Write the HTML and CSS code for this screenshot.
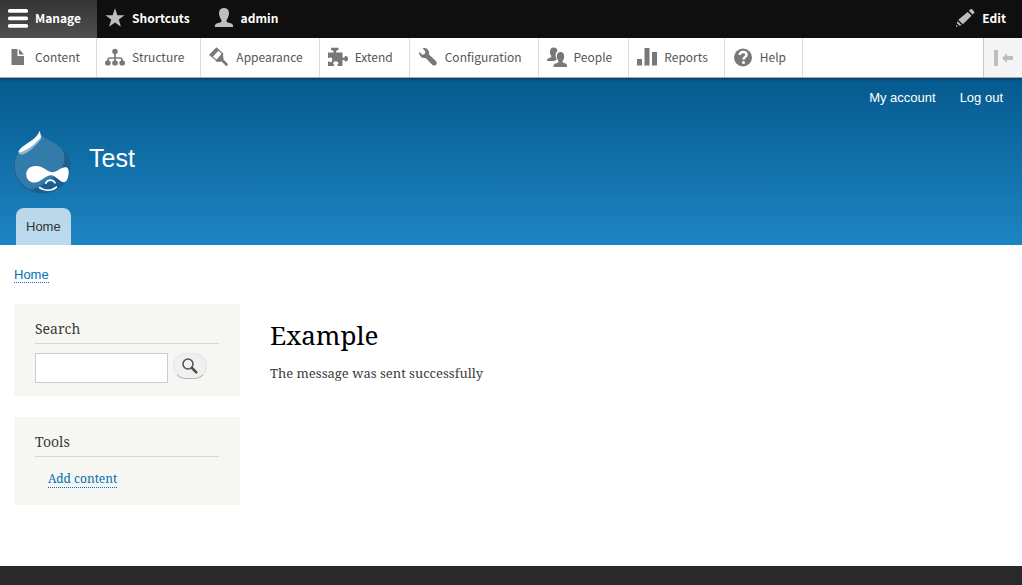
FILE: index.html
```html
<!DOCTYPE html>
<html lang="en">
<head>
<meta charset="utf-8">
<meta name="viewport" content="width=device-width, initial-scale=1">
<title>Example | Test</title>
<link rel="stylesheet" href="styles.css">
</head>
<body>
<nav class="toolbar" aria-label="Administration toolbar">
  <div class="toolbar-bar">
    <a class="bar-item is-active" href="#manage"><svg class="icon" viewBox="0 0 20 20" fill="#fff"><rect y="1" width="20" height="3.700" rx="1.500"/><rect y="8.500" width="20" height="3.700" rx="1.500"/><rect y="16" width="20" height="3.700" rx="1.500"/></svg>Manage</a>
    <a class="bar-item" href="#shortcuts"><svg class="icon" viewBox="0 0 20 20" fill="#bebebe"><path d="M10 .3l2.400 6.900h7.100l-5.700 4.300 2.100 7.200-5.900-4.300-5.900 4.300 2.100-7.200L.5 7.200h7.100z"/></svg>Shortcuts</a>
    <a class="bar-item" href="#admin"><svg class="icon" viewBox="0 0 20 20" fill="#bebebe"><path d="M19.200 19H.8c0-2.700 1-3.300 3.400-4 2.100-.6 3.300-.8 3.300-2.300 0-1-1.100-1.900-1.600-3.400C5 6.700 4.800 4.900 5.300 3.200 5.900 1.100 7.600.1 10 .1s4.100 1 4.700 3.100c.5 1.700.3 3.500-.6 6.100-.5 1.500-1.600 2.400-1.600 3.400 0 1.500 1.200 1.700 3.300 2.300 2.400.7 3.400 1.300 3.400 4z"/></svg>admin</a>
    <button class="bar-item bar-edit" type="button"><svg class="icon" viewBox="0 0 20 20" fill="#bebebe"><path d="M13.800 2.800l1.700-1.600q.8-.5 1.500.1l2.100 2.100q.6.700 0 1.500l-1.600 1.700zM12.700 3.900l3.800 3.800-8.600 8.500-4.600-4.400zM2.600 13.200l4 3.800-2.200.7-2.500-2.500zM1.400 16.700l1.500 1.500-1.900.7z"/></svg>Edit</button>
  </div>
  <div class="toolbar-tray">
    <a class="tray-item" href="#content"><svg class="icon" viewBox="0 0 20 20" fill="#787878"><path d="M3.500 2h6v7H16v9H3.500zM11 2l5 5.500h-5z"/></svg>Content</a>
    <a class="tray-item" href="#structure"><svg class="icon" viewBox="0 0 20 20"><path d="M10 4v12M3 16v-3q0-2 2-2h10q2 0 2 2v3" fill="none" stroke="#787878" stroke-width="1.700"/><g fill="#787878"><circle cx="10" cy="4.500" r="2.700"/><rect y="13.500" width="5.600" height="5" rx="2"/><rect x="7.200" y="13.500" width="5.600" height="5" rx="2"/><rect x="14.400" y="13.500" width="5.600" height="5" rx="2"/></g></svg>Structure</a>
    <a class="tray-item" href="#appearance"><svg class="icon" viewBox="0 0 20 20"><path d="M7.500 1.300l6.300 5.700-6 6.500L1 8z" fill="#fff" stroke="#787878" stroke-width="1.200"/><path d="M7.500.6l2.600 2.300-6.600 7L.4 7.700zM13.600 5.800l1 6.200-3.300 3-5-.4z" fill="#787878"/><path d="M12.500 12.500l5 5" stroke="#787878" stroke-width="2.600" stroke-linecap="round"/></svg>Appearance</a>
    <a class="tray-item" href="#extend"><svg class="icon" viewBox="0 0 20 20" fill="#787878"><path d="M0 5.500h5.500V4L3 2.700V.8h7.500v1.900L8 4v1.500h6.500v5l1.700.2 1-1.600q2.800-.3 2.800 2.700t-2.800 2.700l-1-1.600-1.700.2V19h-5v-1.200l1-1.600q-.3-2-2.700-2t-2.700 2l1 1.600V19H0v-4.500h1l1.500.8q1.800-.3 1.800-2.500T2.500 10.200L1 11H0z"/></svg>Extend</a>
    <a class="tray-item" href="#configuration"><svg class="icon" viewBox="0 0 20 20" fill="#787878"><path d="M4.500 1.300q3.300-.8 5.200 1.100t1.300 5l7 6.600q1.600 2 .1 3.700-1.700 1.700-3.700.2L7.600 11q-3 .5-5-1.500T1.100 4.700L4.300 7.800l2.500-.7.600-2.600z"/></svg>Configuration</a>
    <a class="tray-item" href="#people"><svg class="icon" viewBox="0 0 20 20" fill="#787878"><path d="M7 14H0c0-2 .5-2.500 2-3s2.300-.6 2.300-1.600S3 8 3 5s1-4.500 3.700-4.500S10.400 2 10.400 4q-2 1.500-1.800 4.700c.1 2 1.200 3 1 3.800S8.500 13.300 7 14z"/><path d="M20 20H6.500c0-2.500.8-3.200 2.500-3.700s2.500-.7 2.500-1.800-1.700-2-1.700-5S11 5 13.500 5s3.700 1.500 3.700 4.500-1.700 3.900-1.700 5 .8 1.300 2.500 1.800S20 17.500 20 20z"/></svg>People</a>
    <a class="tray-item" href="#reports"><svg class="icon" viewBox="0 0 20 20" fill="#787878"><path d="M0 12h5v6.500H0zM7.500 1h5v17.500h-5zM15 5h5v13.500h-5z"/></svg>Reports</a>
    <a class="tray-item" href="#help"><svg class="icon" viewBox="0 0 20 20"><circle cx="10" cy="10.500" r="9" fill="#787878"/><path d="M6.700 8q.2-3 3.500-3t3.400 2.800c0 2.400-3.100 2.200-3.100 4.700" fill="none" stroke="#fff" stroke-width="2.400"/><circle cx="10.500" cy="15.500" r="1.500" fill="#fff"/></svg>Help</a>
    <button class="orientation" type="button" aria-label="Vertical orientation"><svg class="icon" viewBox="0 0 20 20" fill="#bebebe"><path d="M1 2h4v16H1zM9 10l5-5v3h6v4h-6v3z"/></svg></button>
  </div>
</nav>

<header class="header">
  <nav class="account" aria-label="User account menu"><a href="#account">My account</a><a href="#logout">Log out</a></nav>
  <div class="branding">
    <a class="logo" href="#home" aria-label="Home"><svg viewBox="0 0 172 195">
      <path d="M79 0c2 17 13 24 36 37 32 18 56 41 56 72 0 50-38 85-86 85S0 157 0 109c0-30 15-45 31-60 20-18 46-19 48-49z" fill="#1b5f91"/>
      <path d="M79 3c3 18 14 23 35 34 25 13 38 26 38 48 0 51-54 82-102 98C20 169 2 142 2 109c0-30 16-46 31-59 21-18 44-19 46-47z" fill="#337ba9"/>
      <path d="M14 69C29 45 66 38 78 6c1 11 3 18 5 22C67 48 49 69 25 77c-10-2-13-4-11-8z" fill="#8bb9d5"/>
      <path d="M14 66C29 43 66 36 78 5c1 9 2 14 4 18C66 43 45 61 20 70c-7-1-8-2-6-4z" fill="#fff"/>
      <path d="M37 136c0-15 12-26 30-25 24 1 35 19 48 19 15 0 27-16 41-15 7 0 10 8 9 19-1 13-6 25-13 26-12 1-27-21-40-21-17 0-32 22-50 22-15 0-25-10-25-25z" fill="#fff"/>
      <path d="M96 163c5-12 21-12 28-1M77 176c14 11 37 11 51-1" fill="none" stroke="#fff" stroke-width="5" stroke-linecap="round"/>
    </svg></a>
    <a class="site-name" href="#home">Test</a>
  </div>
  <nav class="tabs" aria-label="Main navigation"><a href="#home">Home</a></nav>
</header>

<div class="page">
  <nav class="breadcrumb" aria-label="Breadcrumb"><a href="#home">Home</a></nav>
  <div class="columns">
    <aside class="sidebar">
      <section class="block">
        <h2>Search</h2>
        <form class="search">
          <input type="search" aria-label="Search">
          <button type="submit" aria-label="Search"><svg viewBox="0 0 16 16" fill="none" stroke="#505050"><circle cx="6" cy="6" r="5" stroke-width="1.500"/><path d="M10 10l4.300 4.300" stroke-width="2.600" stroke-linecap="round"/></svg></button>
        </form>
      </section>
      <section class="block">
        <h2>Tools</h2>
        <ul class="menu"><li><a href="#add">Add content</a></li></ul>
      </section>
    </aside>
    <main class="content">
      <h1>Example</h1>
      <p>The message was sent successfully</p>
    </main>
  </div>
</div>
<footer class="footer"></footer>
</body>
</html>
```
FILE: styles.css
```css
* { box-sizing: border-box; }
body {
  display: flex;
  flex-direction: column;
  margin: 0;
  min-height: 100vh;
  background: #fff;
  color: #3b3b3b;
  font: 13px/21px Georgia, "Noto Serif", "Liberation Serif", serif;
}
a { color: #0071b3; text-decoration: none; }
button { margin: 0; border: 0; font: inherit; cursor: pointer; }
h1, h2, p, ul { margin: 0; padding: 0; font-weight: normal; }

.toolbar {
  position: relative;
  font: 12px/18px "Source Sans Pro", "Noto Sans CJK SC", "Noto Sans", sans-serif;
  box-shadow: 0 0 3px 1px rgba(0, 0, 0, 0.35);
}
.toolbar-bar { display: flex; height: 38px; background: #0f0f0f; }
.bar-item,
.tray-item {
  display: flex;
  align-items: center;
  gap: 7px;
  padding: 0 16px 2px 8px;
}
.bar-item { background: none; color: #fff; font-weight: bold; }
.bar-item.is-active { background: linear-gradient(#333, #505050); }
.bar-edit { margin-left: auto; padding-left: 0; }
.icon { flex: none; width: 20px; height: 20px; }
.toolbar-tray {
  display: flex;
  height: 40px;
  border-bottom: 1px solid #aaa;
  background: #fff;
}
.tray-item { padding-bottom: 1px; border-right: 1px solid #ddd; color: #565656; }
.orientation {
  display: flex;
  align-items: center;
  justify-content: center;
  width: 39px;
  margin-left: auto;
  padding: 0;
  border-left: 1px solid #c9c9c9;
  background: #f5f5f5;
}

.header {
  background: linear-gradient(#055a8e, #1d84c3);
  font-family: "Liberation Sans", Arial, sans-serif;
}
.account {
  display: flex;
  justify-content: flex-end;
  gap: 24px;
  padding: 9px 19px 0;
}
.account a { color: #fff; }
.branding { display: flex; gap: 18px; padding: 21px 14px 0; }
.logo { width: 57px; height: 65px; }
.logo svg { display: block; width: 100%; height: 100%; }
.site-name { padding-top: 14px; color: #fff; font-size: 25px; line-height: 30px; }
.tabs { display: flex; padding: 14px 16px 0; }
.tabs a {
  padding: 8px 10px;
  border-radius: 8px 8px 0 0;
  background: rgba(255, 255, 255, 0.7);
  color: #333;
}

.page { flex: 1; padding: 19px 14px 60px; }
.breadcrumb { font-family: "Liberation Sans", Arial, sans-serif; }
.breadcrumb a, .menu a { border-bottom: 1px dotted #0071b3; }
.columns { display: flex; gap: 30px; padding-top: 19px; }
.sidebar { display: flex; flex-direction: column; gap: 21px; width: 226px; }
.block {
  padding: 14px 20px 13px;
  border: solid #f9f9f9;
  border-width: 0 1px;
  background: #f6f6f2;
}
.block h2 { padding-bottom: 4px; border-bottom: 1px solid #d6d6d6; font-size: 14px; }
.search { display: flex; gap: 5px; padding-top: 9px; }
.search input {
  width: 133px;
  height: 30px;
  padding: 4px;
  border: 1px solid #ccc;
  background: #fff;
}
.search button {
  display: grid;
  place-items: center;
  width: 34px;
  height: 26px;
  padding: 0;
  border: 1px solid #e4e4e4;
  border-bottom-color: #b4b4b4;
  border-radius: 13px;
  background: #f0f0f0;
}
.search svg { width: 16px; height: 16px; }
.menu { padding: 11px 0 3px 13px; font-size: 12px; list-style: none; }
.content { flex: 1; padding-top: 14px; }
.content h1 { color: #000; font-size: 26px; line-height: 35px; }
.content p { padding-top: 10px; }
.footer { height: 19px; background: #292929; }
```
